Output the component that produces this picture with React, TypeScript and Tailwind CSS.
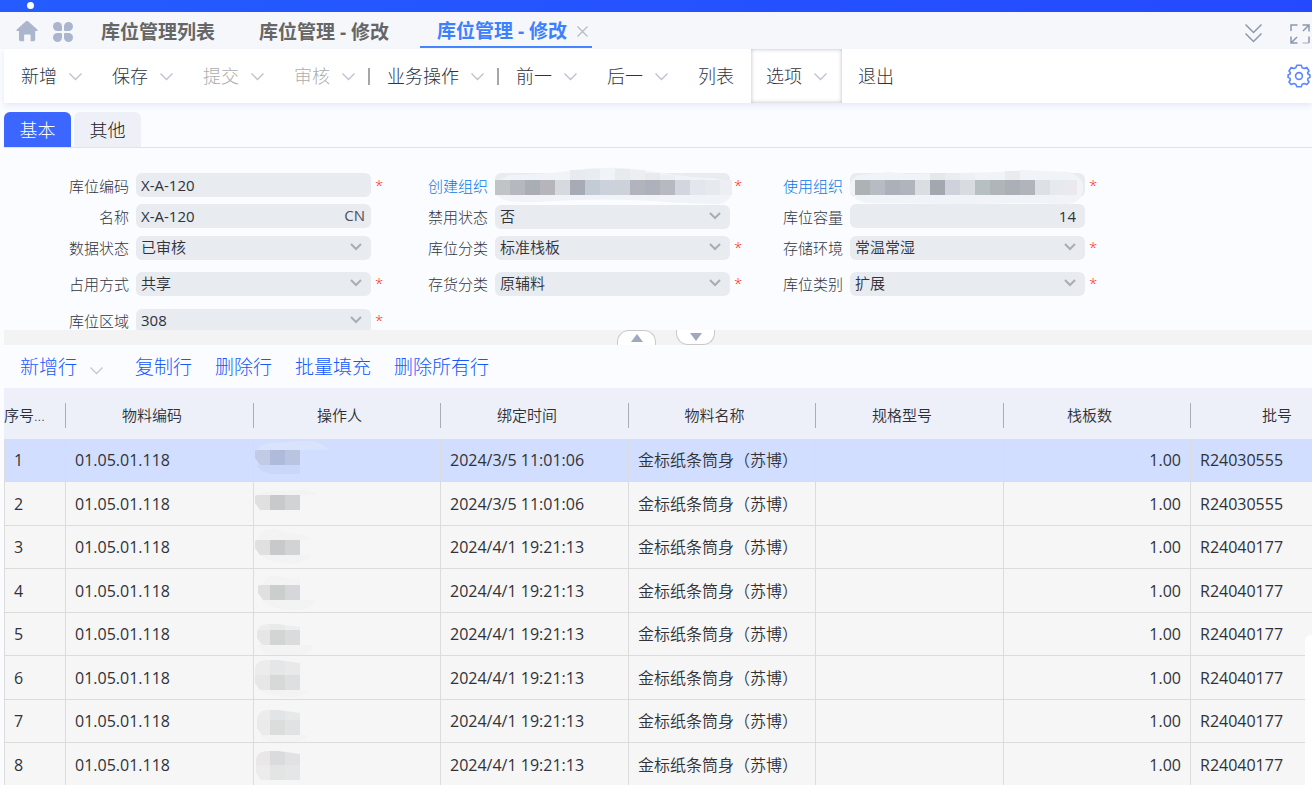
import React from "react";

const FONT = "font-['Open_Sans','Noto_Sans_CJK_SC',sans-serif]";

function Chevron({ className = "" }: { className?: string }) {
  return (
    <svg className={`h-[13px] w-[13px] shrink-0 ${className}`} viewBox="0 0 13 13" fill="none" stroke="currentColor" strokeWidth="1.3" aria-hidden="true">
      <path d="M0.5 3.5 L6.5 9.5 L12.5 3.5" />
    </svg>
  );
}

function TopBar() {
  return (
    <header className="flex h-3 shrink-0 items-start bg-gradient-to-r from-[#245cff] to-[#2549ff] pt-[2px] pl-[27px]">
      <span className="h-[7px] w-[7px] rounded-full bg-white" />
    </header>
  );
}

function PageTabs() {
  return (
    <nav aria-label="页签" className="flex h-[37px] shrink-0 items-center bg-[#f5f7fb]">
      <button aria-label="首页" className="ml-4 h-[22px] w-[22px] text-[#abb5cd]">
        <svg viewBox="0 0 22 22" fill="currentColor" aria-hidden="true">
          <path d="M9.9 1.2 a1.6 1.6 0 0 1 2.2 0 L21.3 9.6 Q22.2 10.8 20.8 11 L19.2 11 L19.2 19.5 Q19.2 21.2 17.5 21.2 L14.6 21.2 L14.6 15.5 Q14.6 14.6 13.7 14.6 L9 14.6 Q8.1 14.6 8.1 15.5 L8.1 21.2 L4.6 21.2 Q3 21.2 3 19.5 L3 11 L1.2 11 Q-0.2 10.8 0.8 9.6 Z" />
        </svg>
      </button>
      <button aria-label="应用" className="mt-[2px] ml-[15px] h-5 w-5 text-[#abb5cd]">
        <svg viewBox="0 0 20 20" fill="currentColor" aria-hidden="true">
          <path d="M4.5 0 A4.5 4.5 0 0 1 9 4.5 V8 Q9 9 8 9 H4.5 A4.5 4.5 0 0 1 4.5 0Z" />
          <path d="M15.5 0 A4.5 4.5 0 0 1 15.5 9 H12 Q11 9 11 8 V4.5 A4.5 4.5 0 0 1 15.5 0Z" />
          <path d="M4.5 11 H8 Q9 11 9 12 V15.5 A4.5 4.5 0 1 1 4.5 11Z" />
          <path d="M12 11 H15.5 A4.5 4.5 0 1 1 11 15.5 V12 Q11 11 12 11Z" />
        </svg>
      </button>
      <div className="ml-[11px] flex h-full items-stretch text-[19px] font-bold whitespace-nowrap text-[#666]">
        <button className="pt-[3px] pr-[27px] pl-[17px]">库位管理列表</button>
        <button className="pt-[3px] pr-[31px] pl-[17px]">库位管理 - 修改</button>
        <div className="mb-px flex items-center gap-[10px] border-b-2 border-[#3d80ff] pt-[5px] pr-1 pl-[17px]">
          <button className="text-[#3d80ff]">库位管理 - 修改</button>
          <button aria-label="关闭" className="text-[#b4bac6]">
            <svg className="h-[11px] w-[11px]" viewBox="0 0 11 11" stroke="currentColor" strokeWidth="1.2" aria-hidden="true">
              <path d="M0.5 0.5 L10.5 10.5 M10.5 0.5 L0.5 10.5" />
            </svg>
          </button>
        </div>
      </div>
      <div className="ml-auto flex items-center gap-7 pt-[4px] pr-[2px] text-[#8c98b0]">
        <button aria-label="展开">
          <svg className="h-5 w-[17px]" viewBox="0 0 17 20" fill="none" stroke="currentColor" strokeWidth="1.5" aria-hidden="true">
            <path d="M0.5 1.5 L8.5 9.5 L16.5 1.5 M0.5 10.5 L8.5 18.5 L16.5 10.5" />
          </svg>
        </button>
        <button aria-label="全屏">
          <svg className="mt-[2px] h-5 w-5" viewBox="0 0 20 20" fill="none" stroke="currentColor" strokeWidth="1.5" aria-hidden="true">
            <path d="M1 7 V1 H7.5 M12.5 1 H19 V7.5 M19 1 L13 7 M1 12.5 V19 H7.5 M1 19 L7 13 M19 12.5 V19" />
            <path d="M12.5 19 H19" opacity="0.5" />
          </svg>
        </button>
      </div>
    </nav>
  );
}

type ToolProps = { label: string; menu?: boolean; disabled?: boolean; boxed?: boolean };

function Tool({ label, menu = true, disabled, boxed }: ToolProps) {
  const tone = disabled ? "text-[#adadad]" : "text-[#2f353f]";
  const box = boxed ? "mr-px ml-[2px] shadow-[inset_0_0_4px_#bbbcc4]" : "";
  return (
    <button disabled={disabled} className={`flex items-center gap-3 px-[15px] ${tone} ${box}`}>
      {label}
      {menu && <Chevron className="text-[#bcc1cd]" />}
    </button>
  );
}

function Separator() {
  return <span className="mr-[2px] -ml-[2px] h-[17px] w-[2px] self-center bg-[#a6a6a6]" />;
}

function Toolbar() {
  return (
    <div role="toolbar" className="z-10 ml-1 flex h-[54px] shrink-0 bg-white pl-[2px] text-lg font-light whitespace-nowrap shadow-[0_3px_6px_#e4eaf6]">
      <Tool label="新增" />
      <Tool label="保存" />
      <Tool label="提交" disabled />
      <Tool label="审核" disabled />
      <Separator />
      <Tool label="业务操作" />
      <Separator />
      <Tool label="前一" />
      <Tool label="后一" />
      <Tool label="列表" menu={false} />
      <Tool label="选项" boxed />
      <Tool label="退出" menu={false} />
      <button aria-label="设置" className="ml-auto pr-px text-[#5b86ff]">
        <svg className="h-6 w-6" viewBox="0 0 24 24" fill="none" stroke="currentColor" strokeWidth="1.6" strokeLinejoin="round" aria-hidden="true">
          <path d="M9.8 1.2 H14.2 L15.2 3.8 L17.2 4.6 L19.8 3.5 L22 7 L20.6 8.8 L21 10 L22.9 11 V13.4 L21 14.4 L20.7 16 L22 18 L19.8 20.6 L17.2 19.6 L15.2 20.3 L14.2 22.8 H9.8 L8.8 20.3 L6.8 19.6 L4.2 20.6 L2 18 L3.3 16 L3 14.4 L1.1 13.4 V11 L3 10 L3.4 8.8 L2 7 L4.2 3.5 L6.8 4.6 L8.8 3.8Z" />
          <circle cx="12" cy="12" r="3.4" />
        </svg>
      </button>
    </div>
  );
}

function FormTabs() {
  return (
    <div role="tablist" className="mt-[9px] ml-1 flex h-9 shrink-0 gap-[3px] border-b border-[#e0e3ea] text-lg font-light">
      <button role="tab" aria-selected="true" className="w-[67px] rounded-t-md bg-[#3b66ff] text-white">基本</button>
      <button role="tab" aria-selected="false" className="w-[67px] rounded-t-md bg-[#eef0f8] text-[#15181e]">其他</button>
    </div>
  );
}

type Mosaic = { blob: string; start: number; tiles: string[]; faint: [number, number, number, string][] };

const createOrg: Mosaic = {
  blob: "M2 28 Q0 18 6 14 L16 9 Q60 8 80 4 Q110 0 140 3 L170 7 Q200 12 220 12 Q238 14 238 26 Q236 36 225 38 Q190 38 160 35 Q110 32 60 35 Q20 38 8 33Z",
  start: 1,
  tiles: ["#c0c4c6", "#b5b8bf", "#a9adb4", "#b6b5bb", "#d6d9de", "#a6abb5", "#c3ccd4", "#cbd2dc", "#cdd1d9", "#b1b4bd", "#acb1bb", "#b6b9c0", "#d3d6df", "#e3e6ec", "#e6e9ee", "#eceef3"],
  faint: [[76, 4, 15, "#e7eaee"], [91, 3, 15, "#e9ecf0"], [121, 3, 15, "#e8ebee"], [136, 4, 15, "#eceef0"], [151, 7, 15, "#e8eaee"], [166, 9, 15, "#eceff3"]],
};

const useOrg: Mosaic = {
  blob: "M0 24 Q1 12 10 9 L40 6 L60 8 L150 6 L175 4 L220 6 Q236 12 234 24 Q232 37 218 38 L180 37 L120 38 L20 37 Q8 36 6 31Z",
  start: 6,
  tiles: ["#adb2b5", "#b7bbc3", "#acb0b9", "#b0b4bd", "#dadde1", "#a3a7af", "#cfd2db", "#d8dce0", "#b6bfc1", "#b0b5b9", "#aaafb8", "#b0b5bb", "#dde1e6", "#e6e9ee", "#ebe9ed"],
  faint: [[81, 7, 15, "#e5e8eb"], [96, 7, 15, "#eaedf0"], [156, 5, 15, "#e9ebef"], [111, 7, 15, "#eef1f4"]],
};

function OrgMosaic({ data }: { data: Mosaic }) {
  return (
    <svg className="pointer-events-none absolute -top-[7px] -left-px h-10 w-[240px]" viewBox="0 0 240 40" aria-hidden="true">
      <path d={data.blob} fill="#f0f3f8" />
      {data.faint.map(([x, y, w, c]) => (
        <rect key={x} x={x} y={y} width={w} height={14 - y} fill={c} />
      ))}
      {data.tiles.map((c, i) => (
        <rect key={i} x={data.start + i * 15} y="14" width={i === data.tiles.length - 1 ? 12 : 15} height="15" fill={c} />
      ))}
    </svg>
  );
}

type FieldProps = {
  id: string;
  label: string;
  value?: string;
  kind: "text" | "select" | "number" | "org";
  required?: boolean;
  suffix?: string;
  mosaic?: Mosaic;
};

function Field({ id, label, value = "", kind, required, suffix, mosaic }: FieldProps) {
  const box = "h-6 w-full rounded-md bg-[#e8ebf0] px-[5px] text-[#2e323a] outline-none";
  const weight = /^\d+$/.test(value) ? "font-normal" : "font-[350]";
  return (
    <div className="flex items-start">
      <label htmlFor={id} className={`mt-1 w-[60px] text-right text-[15px] leading-[18px] font-light whitespace-nowrap ${kind === "org" ? "text-[#0878e8]" : "text-[#2f353f]"}`}>
        {label}
      </label>
      <div className="relative ml-[7px] w-[235px]">
        {kind === "select" ? (
          <>
            <select id={id} defaultValue={value} className={`${box} ${weight} appearance-none pb-[2px] text-[15px]`}>
              <option>{value}</option>
            </select>
            <svg className="pointer-events-none absolute top-2 right-[9px] h-2 w-3 text-[#a9adb4]" viewBox="0 0 12 8" fill="none" stroke="currentColor" strokeWidth="2" aria-hidden="true">
              <path d="M1 1 L6 6 L11 1" />
            </svg>
          </>
        ) : (
          <input id={id} readOnly defaultValue={value} className={`${box} text-[15px] ${kind === "number" ? "pr-[9px] text-right" : ""}`} />
        )}
        {suffix && <span className="absolute top-0 right-[6px] text-[15px] leading-[22px] text-[#4a505a]">{suffix}</span>}
        {mosaic && <OrgMosaic data={mosaic} />}
      </div>
      {required && <span className="ml-1 text-[15px] leading-6 font-light text-[#ff1a0f]">*</span>}
    </div>
  );
}

function BasicForm() {
  return (
    <form className="grid h-[182px] shrink-0 grid-cols-[359px_355px_355px] grid-rows-[31px_31px_36px_37px_24px] overflow-hidden pt-[25px] pl-[69px]">
      <Field id="code" label="库位编码" value="X-A-120" kind="text" required />
      <Field id="createOrg" label="创建组织" kind="org" required mosaic={createOrg} />
      <Field id="useOrg" label="使用组织" kind="org" required mosaic={useOrg} />
      <Field id="name" label="名称" value="X-A-120" kind="text" suffix="CN" />
      <Field id="forbid" label="禁用状态" value="否" kind="select" />
      <Field id="capacity" label="库位容量" value="14" kind="number" />
      <Field id="status" label="数据状态" value="已审核" kind="select" />
      <Field id="group" label="库位分类" value="标准栈板" kind="select" required />
      <Field id="env" label="存储环境" value="常温常湿" kind="select" required />
      <Field id="occupy" label="占用方式" value="共享" kind="select" required />
      <Field id="stock" label="存货分类" value="原辅料" kind="select" required />
      <Field id="type" label="库位类别" value="扩展" kind="select" required />
      <Field id="area" label="库位区域" value="308" kind="select" required />
    </form>
  );
}

function Splitter() {
  return (
    <div className="ml-1 flex h-[15px] shrink-0 justify-center gap-5 bg-[#f3f3f3] pl-4">
      <button aria-label="向上" className="flex h-[15px] w-[39px] items-center justify-center rounded-t-xl border border-b-0 border-[#c9c9c9] bg-white">
        <svg className="h-2 w-3" viewBox="0 0 12 8" fill="#9fa8c0" aria-hidden="true"><path d="M6 0 L12 8 H0Z" /></svg>
      </button>
      <button aria-label="向下" className="flex h-[15px] w-[39px] items-center justify-center rounded-b-xl border border-t-0 border-[#c9c9c9] bg-white">
        <svg className="h-2 w-3" viewBox="0 0 12 8" fill="#9fa8c0" aria-hidden="true"><path d="M0 0 H12 L6 8Z" /></svg>
      </button>
    </div>
  );
}

function RowToolbar() {
  return (
    <div role="toolbar" className="ml-1 flex h-[43px] shrink-0 items-center gap-[23px] pt-px pl-4 text-[19px] font-light whitespace-nowrap text-[#1558ff]">
      <button className="mr-[9px] flex items-center gap-[13px]">
        新增行
        <Chevron className="mt-[6px] text-[#c3c7d0]" />
      </button>
      <button>复制行</button>
      <button>删除行</button>
      <button>批量填充</button>
      <button>删除所有行</button>
    </div>
  );
}

type Row = { time: string; lot: string; y: number; x: number; top: number; tiles: string[]; haze: string; upper: string[] };

const rows: Row[] = [
  { time: "2024/3/5 11:01:06", lot: "R24030555", y: 11, x: 1, top: 11, tiles: ["#c2cbe6", "#afbbda", "#b8c4e0"], haze: "M3 11 Q8 4 18 4 L50 2 Q66 1 75 11Z", upper: [] },
  { time: "2024/3/5 11:01:06", lot: "R24030555", y: 13, x: 1, top: 13, tiles: ["#e0e0e0", "#c8c9cb", "#d2d3d5"], haze: "M3 13 Q8 9 20 9 L46 8 Q56 8 64 13Z", upper: [] },
  { time: "2024/4/1 19:21:13", lot: "R24040177", y: 14, x: 1, top: 14, tiles: ["#e0e0e0", "#c8c9cb", "#d2d3d5"], haze: "M2 14 Q8 1 22 3 Q36 8 44 8 Q54 9 56 14 H46 V29 H57 Q50 40 30 37 Q14 36 6 29Z", upper: [] },
  { time: "2024/4/1 19:21:13", lot: "R24040177", y: 16, x: 4, top: 16, tiles: ["#e0e0e0", "#cbcecd", "#d5d7da"], haze: "M8 16 Q14 5 24 7 L46 11 V31 H62 Q56 42 40 41 Q14 40 8 31Z", upper: [] },
  { time: "2024/4/1 19:21:13", lot: "R24040177", y: 17, x: 3, top: 11, tiles: ["#e6e6e6", "#d3d5d4", "#dadbdd"], haze: "M4 32 H60 Q54 42 44 42 H20 Q8 42 4 32Z", upper: ["#ededed", "#e8e9e9", "#eeeeee"] },
  { time: "2024/4/1 19:21:13", lot: "R24040177", y: 19, x: 1, top: 4, tiles: ["#e7e7e7", "#d7d9d8", "#dedfe1"], haze: "M6 34 H54 Q48 42 36 41 Q18 41 6 34Z", upper: ["#ececec", "#e5e6e8", "#e9e9e9"] },
  { time: "2024/4/1 19:21:13", lot: "R24040177", y: 20, x: 3, top: 10, tiles: ["#eaeaea", "#dbdddc", "#e1e2e4"], haze: "M6 35 H54 Q48 42 40 42 H20 Q10 42 6 35Z", upper: ["#ececec", "#e3e4e5", "#e7e8e9"] },
  { time: "2024/4/1 19:21:13", lot: "R24040177", y: 22, x: 2, top: 8, tiles: ["#ececec", "#e3e4e4", "#e5e6e8"], haze: "M0 0", upper: ["#e9e7e8", "#dadbdd", "#e2e2e4"] },
];

function OperatorMosaic({ row, index }: { row: Row; index: number }) {
  const bottom = row.y + 15;
  const r = row.top < row.y ? 12 : 3;
  const right = row.x + r;
  const id = `operator-${index}`;
  return (
    <svg className="block h-[42px] w-[78px]" viewBox="0 0 78 42" aria-hidden="true">
      <clipPath id={id}>
        <path d={`M${right} ${row.top} H24 L46 ${row.top + (row.upper.length ? 3 : 0)} V${bottom} H${row.x + 5} L${row.x} ${bottom - 7} V${row.top + r - 2} Q${row.x} ${row.top} ${right} ${row.top}Z`} />
      </clipPath>
      <path d={row.haze} fill={index === 0 ? "#d9e3fc" : "#f3f3f4"} />
      {index === 0 && <path d="M3 26 H46 V35 H16 Q6 32 3 26Z" fill="#cbd7f8" />}
      <g clipPath={`url(#${id})`}>
        {row.upper.map((c, i) => (
          <rect key={i} x={1 + i * 15} y={row.top} width="15" height={row.y - row.top} fill={c} />
        ))}
        {row.tiles.map((c, i) => (
          <rect key={i} x={1 + i * 15} y={row.y} width="15" height="15" fill={c} />
        ))}
      </g>
    </svg>
  );
}

const heads = ["物料编码", "操作人", "绑定时间", "物料名称", "规格型号", "栈板数"];

function MaterialTable() {
  const cell = "border-r border-b border-[#dcdcdc] px-[9px]";
  const head = "p-0 pt-[15px] pb-[11px] font-[350]";
  return (
    <div className="ml-1 min-h-0 flex-1 overflow-hidden">
      <table className="w-[1359px] table-fixed border-separate border-spacing-0 whitespace-nowrap">
        <colgroup>
          <col className="w-[62px]" />
          <col className="w-[188px]" />
          <col className="w-[187px]" />
          <col className="w-[188px]" />
          <col className="w-[187px]" />
          <col className="w-[188px]" />
          <col className="w-[187px]" />
          <col className="w-[172px]" />
        </colgroup>
        <thead className="bg-[#edf0f9] text-[15px] text-[#2c2f36]">
          <tr>
            <th scope="col" className={head}>
              <div className="flex h-[25px] items-center border-r border-[#a9adb8]">序号...</div>
            </th>
            {heads.map((h) => (
              <th key={h} scope="col" className={head}>
                <div className="flex h-[25px] items-center justify-center border-r border-[#a9adb8] pr-[15px]">{h}</div>
              </th>
            ))}
            <th scope="col" className={head}>
              <div className="flex h-[25px] items-center justify-center">批号</div>
            </th>
          </tr>
        </thead>
        <tbody className="text-base leading-[22px] text-[#303238]">
          {rows.map((row, i) => (
            <tr key={i} className="bg-[#f6f6f6] first:bg-[#d2deff] odd:h-[43px] even:h-[44px]">
              <td className={`${cell} border-l`}>{i + 1}</td>
              <td className={cell}>01.05.01.118</td>
              <td className="border-r border-b border-[#dcdcdc] p-0 align-top">
                <OperatorMosaic row={row} index={i} />
              </td>
              <td className={cell}>{row.time}</td>
              <td className={`${cell} font-[350]`}>金标纸条筒身（苏博）</td>
              <td className={cell} />
              <td className={`${cell} text-right`}>1.00</td>
              <td className={cell}>{row.lot}</td>
            </tr>
          ))}
        </tbody>
      </table>
    </div>
  );
}

export default function App() {
  return (
    <div className={`relative flex h-screen flex-col overflow-hidden bg-[#fbfcff] ${FONT}`}>
      <TopBar />
      <PageTabs />
      <Toolbar />
      <FormTabs />
      <BasicForm />
      <Splitter />
      <RowToolbar />
      <MaterialTable />
      <aside className="absolute right-0 bottom-0 h-[150px] w-[7px] rounded-tl-md bg-white" />
    </div>
  );
}
